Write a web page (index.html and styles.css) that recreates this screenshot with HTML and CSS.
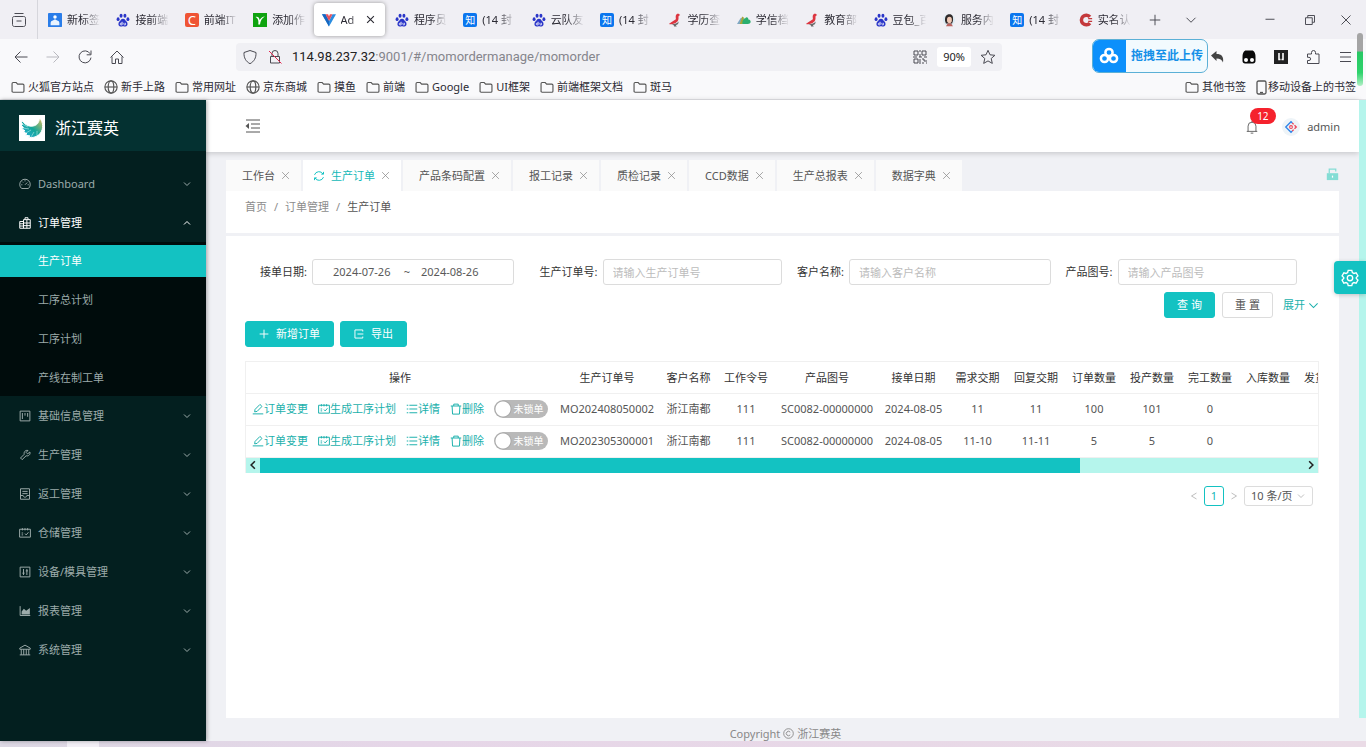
FILE: index.html
```html
<!DOCTYPE html>
<html lang="zh-CN">
<head>
<meta charset="utf-8">
<title>生产订单</title>
<link rel="stylesheet" href="styles.css">
</head>
<body>
<svg class="defs" aria-hidden="true">
  <symbol id="paw" viewBox="0 0 16 16"><g fill="#2a35c8"><ellipse cx="2.4" cy="7" rx="1.7" ry="2.2"/><ellipse cx="5.8" cy="3.1" rx="1.7" ry="2.3"/><ellipse cx="10.2" cy="3.1" rx="1.7" ry="2.3"/><ellipse cx="13.6" cy="7" rx="1.7" ry="2.2"/><path d="M8 6.6c2.4 0 2.6 2 4 3.200 1.700 1.500 1.800 5.600-1.200 5.600-1.200 0-1.800-.4-2.800-.4s-1.600.4-2.800.4c-3 0-2.900-4.100-1.200-5.600C5.400 8.600 5.600 6.600 8 6.600z"/></g><path d="M7 10v3.600H5.800a1 1 0 0 1 0-2H7M9 11.200v1.600c0 .6.300.8 1.700.8v-2.400" fill="none" stroke="#fff" stroke-width=".9"/></symbol>
  <symbol id="bird" viewBox="0 0 16 16"><path d="M11.500 .7c-2 .6-2.800 2-2.700 4l.2 2.500C7.500 8.600 5 9.500 1 12.600c4 .6 7-.2 9-2.200 1.700-1.700 2.200-3.200 2-5.400-.1-1.400.2-2.200 2-2.800z" fill="#dc3540"/><path d="M4 12.600c3 .2 6.500-.6 8-3 .4 2.400-1 4-3 4.100l1 1.700H7l-.6-1.600z" fill="#6b6a6a"/></symbol>
  <symbol id="hill" viewBox="0 0 16 16"><path d="M0 12.500 4 6l2-1-2.500 7.500z" fill="#7fa7c4"/><path d="M3 12.500 6 4l2 1.500-1.500 7z" fill="#a7a338"/><path d="M6 12.500C6 8 8 5.500 9.500 6c1-2 3.500-1 3.500 1.300 2 0 3 1.700 2.500 3.400-.3 1.300-1.500 1.800-3 1.800z" fill="#2aae6e"/></symbol>
  <symbol id="folder" viewBox="0 0 16 16"><path d="M1.200 12.800V4.200c0-.8.500-1.300 1.300-1.300h3.400l1.700 1.800h5.900c.8 0 1.300.5 1.300 1.300v6.800c0 .7-.5 1.200-1.300 1.200h-11c-.8 0-1.300-.5-1.300-1.200z"/></symbol>
  <symbol id="globe" viewBox="0 0 16 16"><circle cx="8" cy="8" r="7"/><ellipse cx="8" cy="8" rx="3.200" ry="7"/><path d="M1 8h14"/></symbol>
  <symbol id="down" viewBox="0 0 16 16"><path d="M2 5l6 6 6-6"/></symbol>
  <symbol id="up" viewBox="0 0 16 16"><path d="M2 11l6-6 6 6"/></symbol>
  <symbol id="left" viewBox="0 0 16 16"><path d="M13 2L3 8l10 6"/></symbol>
  <symbol id="right" viewBox="0 0 16 16"><path d="M3 2l10 6-10 6"/></symbol>
  <symbol id="x" viewBox="0 0 16 16"><path d="M2 2l12 12M14 2L2 14"/></symbol>
  <symbol id="plus" viewBox="0 0 16 16"><path d="M8 1v14M1 8h14"/></symbol>
  <symbol id="edit" viewBox="0 0 16 16"><path d="M1 14.500h14M3.500 11.800l.6-3.300 6.500-6.600 2.700 2.700-6.500 6.600z"/></symbol>
  <symbol id="plan" viewBox="0 0 16 16"><path d="M.8 3h14.400v10.500H.8zM4.500 1.500v3M8 1.500v3M11.500 1.500v3M3.500 8h2M3.500 10.500h2M8 8.800l1.600 1.800L12.600 7"/></symbol>
  <symbol id="list" viewBox="0 0 16 16"><path d="M4.500 3H15M4.500 8H15M4.500 13H15M1 3h2M1 8h2M1 13h2"/></symbol>
  <symbol id="trash" viewBox="0 0 16 16"><path d="M1 4h14M5 4V1.500h6V4M2.800 4l.6 10.800h9.200L13.200 4"/></symbol>
</svg>

<div class="browser">
  <div class="tabstrip">
    <button class="recent" aria-label="历史标签"><svg class="i16" viewBox="0 0 16 16"><path d="M3.500 1.500h9M1.500 6.500c0-1.500.5-2 2-2h9c1.500 0 2 .5 2 2v6c0 1.300-.7 2-2 2h-9c-1.300 0-2-.7-2-2zM5.500 9h5"/></svg></button>
    <div class="tabs">
      <button class="tab"><svg class="fav" viewBox="0 0 16 16"><rect width="16" height="16" rx="1" fill="#2a7de9"/><circle cx="8" cy="4.500" r="2" fill="#fff"/><path d="M3 14V11q0-2 2.500-2.500L8 7l2.500 1.500Q13 9 13 11v3z" fill="#e9f3ff"/></svg><span>新标签</span></button>
      <button class="tab"><svg class="fav"><use href="#paw"/></svg><span>接前端</span></button>
      <button class="tab"><i class="fav letter orange">C</i><span>前端IT</span></button>
      <button class="tab"><svg class="fav" viewBox="0 0 16 16"><rect width="16" height="16" fill="#0fa30f"/><path d="M3 4.500c3-.5 4 1 4.500 3.500C9 6 11 4 13.500 4 10 6 8.500 9 8 13H6c.5-3 .5-6.500-3-8.500z" fill="#fff"/></svg><span>添加作</span></button>
      <button class="tab current"><svg class="fav" viewBox="0 0 16 16"><path d="M0 1.500h4L8 9l4-7.500h4L8 15.500z" fill="#2b8de0"/><path d="M0 1.500h4L8 9v6.500z" fill="#1867c0"/><path d="M4 1.500h3L8 4l1-2.500h3L8 9z" fill="#e8505b"/></svg><span>Ad</span><svg class="tabx"><use href="#x"/></svg></button>
      <button class="tab"><svg class="fav"><use href="#paw"/></svg><span>程序员</span></button>
      <button class="tab"><i class="fav letter blue">知</i><span>(14 封</span></button>
      <button class="tab"><svg class="fav"><use href="#paw"/></svg><span>云队友</span></button>
      <button class="tab"><i class="fav letter blue">知</i><span>(14 封</span></button>
      <button class="tab"><svg class="fav"><use href="#bird"/></svg><span>学历查</span></button>
      <button class="tab"><svg class="fav"><use href="#hill"/></svg><span>学信档</span></button>
      <button class="tab"><svg class="fav"><use href="#bird"/></svg><span>教育部</span></button>
      <button class="tab"><svg class="fav"><use href="#paw"/></svg><span>豆包_百</span></button>
      <button class="tab"><svg class="fav" viewBox="0 0 16 16"><circle cx="8" cy="8" r="7" fill="#dceaf2"/><path d="M3.500 9C3 4 5 1.500 8.500 1.500S13 4 12.500 9l-1 3h-7z" fill="#302a2a"/><ellipse cx="8.500" cy="8" rx="2.800" ry="3.600" fill="#f0c8b4"/><path d="M4.500 15l2-3h4l2 3z" fill="#b9615d"/></svg><span>服务内</span></button>
      <button class="tab"><i class="fav letter blue">知</i><span>(14 封</span></button>
      <button class="tab"><svg class="fav" viewBox="0 0 16 16"><path d="M12.500 4.500A5.500 5.500 0 1 0 12.500 11.500" fill="none" stroke="#c4393c" stroke-width="4"/><path d="M10.500 6.500H15M10.500 9.500H15" stroke="#c4393c" stroke-width="1.500"/></svg><span>实名认</span></button>
    </div>
    <div class="winctl">
      <button aria-label="新建标签"><svg class="i12"><use href="#plus"/></svg></button>
      <button aria-label="标签列表"><svg class="i12"><use href="#down"/></svg></button>
      <button class="push" aria-label="最小化"><svg class="i12" viewBox="0 0 16 16"><path d="M2 7h12"/></svg></button>
      <button aria-label="还原"><svg class="i12" viewBox="0 0 16 16"><path d="M2 5h9v9H2zM5 5V2h9v9h-3"/></svg></button>
      <button aria-label="关闭"><svg class="i12"><use href="#x"/></svg></button>
    </div>
  </div>

  <div class="navbar">
    <div class="navbtns">
      <button aria-label="后退"><svg class="i16" viewBox="0 0 16 16"><path d="M14.500 8H2M7.500 2.500L2 8l5.500 5.500"/></svg></button>
      <button class="off" aria-label="前进"><svg class="i16" viewBox="0 0 16 16"><path d="M1.500 8H14M8.500 2.500L14 8l-5.500 5.500"/></svg></button>
      <button aria-label="刷新"><svg class="i16" viewBox="0 0 16 16"><path d="M13.200 4.800A6 6 0 1 0 14 8.600M14 1.500v4.300H9.700"/></svg></button>
      <button aria-label="主页"><svg class="i16" viewBox="0 0 16 16"><path d="M1.500 8.500L8 2l6.500 6.500M3 7.500v7h3.500V10h3v4.500H13v-7"/></svg></button>
    </div>
    <div class="urlbar">
      <svg class="i16" viewBox="0 0 16 16"><path d="M8 1.500l6 2c.3 5.500-2 9-6 11.200C4 12.500 1.700 9 2 3.500z"/></svg>
      <svg class="i16" viewBox="0 0 16 16"><path d="M3.500 7.500h9v6.500h-9zM5 7.500V4.500a3 3 0 0 1 6 0v3"/><path d="M2 2l12.500 12.500" stroke="#e22850"/></svg>
      <p class="url"><b>114.98.237.32</b>:9001/#/momordermanage/momorder</p>
      <svg class="i16 qr" viewBox="0 0 16 16"><path d="M2 2h4v4H2zM10 2h4v4h-4zM2 10h4v4H2zM8 1v2M8 5v3M1 8h4M7 8h3M12 8h3M8 10v5M10 10h2v2h3M10 14h2M14 14h1"/></svg>
      <span class="zoomlevel">90%</span>
      <svg class="i16" viewBox="0 0 16 16"><path d="M8 1.300l2 4.500 4.900.5-3.700 3.200 1.100 4.900L8 11.900l-4.300 2.500 1.100-4.900L1.100 6.300 6 5.800z"/></svg>
    </div>
    <div class="exts">
      <svg class="i16" viewBox="0 0 16 16"><path d="M2 6.500L7.500 2v3c5 0 7.500 2.500 6.500 8.500-1-2.800-3-4-6.500-4v2.500z" fill="#444" stroke="none"/></svg>
      <svg class="i16" viewBox="0 0 16 16"><path d="M1.500 8C1.500 4 3 1.500 5 1.500h6c2 0 3.500 2.500 3.500 6.500v4c0 1.500-1 2.500-2.500 2.500H4c-1.500 0-2.500-1-2.500-2.500z" fill="#0a0a0a" stroke="none"/><circle cx="5" cy="11" r="2" fill="#fff" stroke="none"/><circle cx="11" cy="11" r="2" fill="#fff" stroke="none"/></svg>
      <svg class="i16" viewBox="0 0 16 16"><path d="M1 1h14v14H1z" fill="#222" stroke="none"/><path d="M6 4v6.500h1.500M10 4v6.500H8.500" stroke="#fff" stroke-width="1.600"/></svg>
      <svg class="i16" viewBox="0 0 16 16"><path d="M2.500 5h4V3.500a2 2 0 0 1 4 0V5h3.500v9.500H2.500v-3H4a1.600 1.600 0 0 0 0-3.200H2.500z"/></svg>
      <svg class="i16" viewBox="0 0 16 16"><path d="M3 3.500h11M3 8h11M3 12.500h11"/></svg>
    </div>
    <button class="upload"><span class="cloud"><svg viewBox="0 0 20 20"><circle cx="10" cy="6.500" r="3.600"/><circle cx="5.500" cy="12.500" r="3.600"/><circle cx="14.500" cy="12.500" r="3.600"/></svg></span><span class="uptext">拖拽至此上传</span></button>
    <i class="pill"></i>
  </div>

  <div class="bookmarks">
    <a href="#"><svg class="i14"><use href="#folder"/></svg>火狐官方站点</a>
    <a href="#"><svg class="i14"><use href="#globe"/></svg>新手上路</a>
    <a href="#"><svg class="i14"><use href="#folder"/></svg>常用网址</a>
    <a href="#"><svg class="i14"><use href="#globe"/></svg>京东商城</a>
    <a href="#"><svg class="i14"><use href="#folder"/></svg>摸鱼</a>
    <a href="#"><svg class="i14"><use href="#folder"/></svg>前端</a>
    <a href="#"><svg class="i14"><use href="#folder"/></svg>Google</a>
    <a href="#"><svg class="i14"><use href="#folder"/></svg>UI框架</a>
    <a href="#"><svg class="i14"><use href="#folder"/></svg>前端框架文档</a>
    <a href="#"><svg class="i14"><use href="#folder"/></svg>斑马</a>
    <a href="#" class="push"><svg class="i14"><use href="#folder"/></svg>其他书签</a>
    <a href="#" class="phone"><svg viewBox="0 0 11 15"><rect x="1" y="1" width="9" height="13" rx="1.500"/><path d="M4 12.500h3"/></svg>移动设备上的书签</a>
  </div>
</div>

<div class="app">
  <aside class="side">
    <div class="brand">
      <svg viewBox="0 0 26 26"><defs><linearGradient id="wing" x1="0" y1="1" x2="1" y2="0"><stop offset="0" stop-color="#27aee0"/><stop offset=".5" stop-color="#14a79b"/><stop offset="1" stop-color="#e8c05a"/></linearGradient></defs><path d="M0 0h26v26H0z" fill="#fff"/><path d="M2 4c3 5 7 8 12 7 4-.6 6-3 6.500-8 4 4 4 11 1 15-2.500 3.600-8 5.500-12.500 4l2-1-5-1 2-1.200-4-2 2-1-3.500-2.300 2-.8-2.800-3 2-.4-2.200-3 1.800.2z" fill="url(#wing)"/><path d="M3 9l6 3M4 13l6 1M7 18l5-3M12 22l3-5M18 21v-5" stroke="#d5f4ee" stroke-width=".5"/></svg>
      <h1>浙江赛英</h1>
    </div>
    <nav class="menu">
      <a href="#"><svg class="i12" viewBox="0 0 16 16"><path d="M3.500 14a7 7 0 1 1 9 0zM8 9l3-3M8 3v1.500M3 9h1.500M11.500 9H13M4.500 5l1 1"/></svg>Dashboard<svg class="arrow"><use href="#down"/></svg></a>
      <a href="#" class="open"><svg class="i12" viewBox="0 0 16 16"><path d="M1 6h5v9H1zM6 15V3.500h9V15zM8 3.500V1h4v2.500M6 8h9M6 11.500h9M10.500 3.500V15M1 9h5M1 12h5"/></svg>订单管理<svg class="arrow"><use href="#up"/></svg></a>
      <div class="sub">
        <a href="#" class="selected">生产订单</a>
        <a href="#">工序总计划</a>
        <a href="#">工序计划</a>
        <a href="#">产线在制工单</a>
      </div>
      <a href="#"><svg class="i12" viewBox="0 0 16 16"><path d="M1.500 1.500h13v13h-13zM4.500 4v8M8 4v3.500M11.500 4v5"/></svg>基础信息管理<svg class="arrow"><use href="#down"/></svg></a>
      <a href="#"><svg class="i12" viewBox="0 0 16 16"><path d="M2 12l5-5c-.8-3 1.500-6 5-5L9.500 4.500l2 2L14.500 4c1 3.500-2 6-5 5l-5.300 5.200z"/></svg>生产管理<svg class="arrow"><use href="#down"/></svg></a>
      <a href="#"><svg class="i12" viewBox="0 0 16 16"><path d="M2 1h12v14H2zM4.500 4.500h7M4.500 7.500h7M2 10h3.500c0 3 5 3 5 0H14"/></svg>返工管理<svg class="arrow"><use href="#down"/></svg></a>
      <a href="#"><svg class="i12"><use href="#plan"/></svg>仓储管理<svg class="arrow"><use href="#down"/></svg></a>
      <a href="#"><svg class="i12" viewBox="0 0 16 16"><path d="M1.500 1.500h13v13h-13zM6 4v8M4.500 9.500h3M10.500 4v8M9 6.500h3"/></svg>设备/模具管理<svg class="arrow"><use href="#down"/></svg></a>
      <a href="#"><svg class="i12" viewBox="0 0 16 16"><path d="M1.500 1.500v12.500H15"/><path d="M3.500 12.500V8.500L6.500 5l3 2.500L14.500 4v8.500z" fill="currentColor" stroke="none"/></svg>报表管理<svg class="arrow"><use href="#down"/></svg></a>
      <a href="#"><svg class="i12" viewBox="0 0 16 16"><path d="M1 7V5.500L8 1.500l7 4V7zM1 14.500h14M3 7v7.500M6.300 7v7.500M9.700 7v7.500M13 7v7.500"/></svg>系统管理<svg class="arrow"><use href="#down"/></svg></a>
    </nav>
  </aside>

  <div class="main">
    <header class="top">
      <button aria-label="收起菜单"><svg class="i16" viewBox="0 0 16 16"><path d="M1 2h14M6 6h9M6 10h9M1 14h14"/><path d="M4 5v6L.5 8z" fill="currentColor" stroke="none"/></svg></button>
      <div class="user">
        <button class="bell" aria-label="通知"><svg class="i14" viewBox="0 0 16 16"><path d="M2 13h12M3.500 13V7a4.500 4.500 0 0 1 9 0v6M8 2.500V1M6.500 15h3"/></svg><span class="badge">12</span></button>
        <span class="avatar"><svg viewBox="0 0 16 16"><path d="M9.500 3.500L8 2 2 8l6 6 1.500-1.500" fill="none" stroke="#2c83e8" stroke-width="1.500"/><path d="M9.500 3.500L11 5M9.500 12.500L11 11M12 6l2 2-2 2" fill="none" stroke="#ee4054" stroke-width="1.500"/><circle cx="8" cy="8" r="1.600" fill="none" stroke="#ee4054" stroke-width="1.200"/></svg></span>
        <span>admin</span>
      </div>
    </header>

    <div class="pages">
      <button>工作台<svg><use href="#x"/></svg></button>
      <button class="on"><svg class="spin" viewBox="0 0 16 16"><path d="M2 6.500a6.300 6.300 0 0 1 11.500-1M14 9.500a6.300 6.300 0 0 1-11.500 1M14 2.500v3h-3M2 13.500v-3h3"/></svg>生产订单<svg><use href="#x"/></svg></button>
      <button>产品条码配置<svg><use href="#x"/></svg></button>
      <button>报工记录<svg><use href="#x"/></svg></button>
      <button>质检记录<svg><use href="#x"/></svg></button>
      <button>CCD数据<svg><use href="#x"/></svg></button>
      <button>生产总报表<svg><use href="#x"/></svg></button>
      <button>数据字典<svg><use href="#x"/></svg></button>
      <svg class="unlock" viewBox="0 0 16 16"><path d="M1 7h14v8.500H1z" fill="currentColor" stroke="none"/><path d="M4 7V2h8v3"/><path d="M8 10v2.500" stroke="#fff"/></svg>
    </div>

    <div class="crumbs"><a href="#">首页</a><i>/</i><a href="#">订单管理</a><i>/</i><span>生产订单</span></div>

    <section class="panel">
      <form class="filters">
        <div class="field"><label for="d1">接单日期:</label><div class="range"><input id="d1" value="2024-07-26"><span>~</span><input aria-label="结束日期" value="2024-08-26"></div></div>
        <div class="field inset"><label for="no">生产订单号:</label><input id="no" placeholder="请输入生产订单号"></div>
        <div class="field"><label for="cu">客户名称:</label><input id="cu" placeholder="请输入客户名称"></div>
        <div class="field outset"><label for="dr">产品图号:</label><input id="dr" placeholder="请输入产品图号"></div>
      </form>
      <div class="query"><button class="btn primary">查 询</button><button class="btn">重 置</button><a href="#">展开<svg><use href="#down"/></svg></a></div>
      <div class="tools"><button class="btn primary"><svg><use href="#plus"/></svg>新增订单</button><button class="btn primary"><svg viewBox="0 0 16 16"><path d="M14 4V1.500H1.500v13H14V12M5.500 8H15"/></svg>导出</button></div>

      <div class="tablebox">
        <div class="clip">
        <table>
          <colgroup><col class="w308"><col class="w106"><col class="w57"><col class="w58"><col class="w104"><col class="w69"><col class="w59"><col class="w58"><col class="w58"><col class="w58"><col class="w58"><col class="w58"><col class="w58"><col></colgroup>
          <thead><tr><th>操作</th><th>生产订单号</th><th>客户名称</th><th>工作令号</th><th>产品图号</th><th>接单日期</th><th>需求交期</th><th>回复交期</th><th>订单数量</th><th>投产数量</th><th>完工数量</th><th>入库数量</th><th>发货数量</th><th></th></tr></thead>
          <tbody>
            <tr><td><div class="ops"><a href="#"><svg><use href="#edit"/></svg>订单变更</a><a href="#"><svg><use href="#plan"/></svg>生成工序计划</a><a href="#"><svg><use href="#list"/></svg>详情</a><a href="#"><svg><use href="#trash"/></svg>删除</a><button class="switch" role="switch" aria-checked="false">未锁单</button></div></td><td>MO202408050002</td><td>浙江南都</td><td>111</td><td>SC0082-00000000</td><td>2024-08-05</td><td>11</td><td>11</td><td>100</td><td>101</td><td>0</td><td></td><td></td><td></td></tr>
            <tr><td><div class="ops"><a href="#"><svg><use href="#edit"/></svg>订单变更</a><a href="#"><svg><use href="#plan"/></svg>生成工序计划</a><a href="#"><svg><use href="#list"/></svg>详情</a><a href="#"><svg><use href="#trash"/></svg>删除</a><button class="switch" role="switch" aria-checked="false">未锁单</button></div></td><td>MO202305300001</td><td>浙江南都</td><td>111</td><td>SC0082-00000000</td><td>2024-08-05</td><td>11-10</td><td>11-11</td><td>5</td><td>5</td><td>0</td><td></td><td></td><td></td></tr>
          </tbody>
        </table>
        </div>
        <div class="hscroll"><svg viewBox="0 0 16 16"><path d="M11 2L5 8l6 6"/></svg><div class="track"><div class="thumb"></div></div><svg viewBox="0 0 16 16"><path d="M5 2l6 6-6 6"/></svg></div>
      </div>

      <div class="pager"><button aria-label="上一页"><svg><use href="#left"/></svg></button><button class="now">1</button><button aria-label="下一页"><svg><use href="#right"/></svg></button><span class="size"><select aria-label="每页条数"><option>10 条/页</option></select><svg><use href="#down"/></svg></span></div>
    </section>

    <footer>Copyright <svg viewBox="0 0 16 16"><circle cx="8" cy="8" r="7"/><path d="M10.500 6a3.200 3.200 0 1 0 0 4"/></svg> 浙江赛英</footer>
  </div>
  <div class="vtrack"></div>
  <button class="gear" aria-label="设置"><svg viewBox="0 0 20 20"><path d="M8 1.500h4l.6 2.400 1.800 1 2.400-.7 2 3.500-1.800 1.700v1.200l1.800 1.700-2 3.500-2.400-.7-1.800 1-.6 2.400H8l-.6-2.400-1.800-1-2.400.7-2-3.500L3 10.600V9.400L1.200 7.700l2-3.500 2.400.7 1.800-1z"/><circle cx="10" cy="10" r="3"/></svg></button>
</div>
<div class="desk"><i></i></div>
</body>
</html>
```

FILE: styles.css
```css
* { box-sizing: border-box; }
body {
  margin: 0;
  min-height: 100vh;
  display: flex;
  flex-direction: column;
  font: 11px/16px "Noto Sans", "Noto Sans CJK SC", sans-serif;
  color: #555;
  overflow: hidden;
}
button, input, select { font: inherit; color: inherit; }
button { border: 0; background: none; padding: 0; display: flex; align-items: center; justify-content: center; white-space: nowrap; }
a { color: inherit; text-decoration: none; display: flex; align-items: center; white-space: nowrap; }
i { font-style: normal; }
svg { fill: none; stroke: currentColor; flex: none; }
.defs { position: absolute; width: 0; height: 0; }
.i16 { width: 16px; height: 16px; }
.i14 { width: 14px; height: 14px; }
.i12 { width: 12px; height: 12px; stroke-width: 1.3px; }
.push { margin-left: auto; }

/* browser frame */
.browser { color: #4a4a52; background: #f9f9fb; border-bottom: 1px solid #e2e2e6; }
.tabstrip { display: flex; align-items: center; height: 39px; background: #f0eff4; }
.recent { width: 38px; height: 39px; border-right: 1px solid #d6d6dc; }
.tabs { display: flex; flex: 1; padding-left: 2px; min-width: 0; }
.tab { flex: 1 1 0; min-width: 0; height: 33px; margin-right: 2px; padding: 0 5px 0 8px; gap: 5px; border-radius: 4px; justify-content: flex-start; color: #2b2a33; }
.tab span { flex: 1; min-width: 0; overflow: hidden; text-align: left; mask-image: linear-gradient(to right, #000 45%, transparent 98%); }
.fav { width: 14px; height: 14px; flex: none; stroke: none; }
.letter { border-radius: 2px; color: #fff; font-size: 10px; line-height: 14px; text-align: center; }
.orange { background: #ef5434; font-size: 13px; }
.blue { background: #0b76ee; }
.current { padding-right: 10px; background: #fff; box-shadow: 0 0 4px #999; }
.tabx { width: 9px; height: 9px; stroke-width: 2; }
.winctl { display: flex; align-items: center; width: 227px; padding: 0 14px 0 10px; gap: 24px; }
.winctl .push { margin-right: 4px; margin-left: auto; }

.navbar { position: relative; display: flex; align-items: center; height: 36px; }
.navbtns { display: flex; gap: 16px; padding-left: 13px; width: 236px; }
.off { color: #b9b9bf; }
.urlbar { flex: 1; display: flex; align-items: center; height: 28px; padding: 0 6px; gap: 9px; border-radius: 4px; background: #f0f0f4; }
.url { flex: 1; margin: 0; font: 13px/20px Roboto, "Noto Sans", sans-serif; color: #85858c; }
.url b { font-weight: 400; color: #222; }
.zoomlevel { padding: 2px 6px; border-radius: 3px; background: #fff; font-size: 11px; color: #222; }
.exts { display: flex; justify-content: space-between; width: 364px; padding: 0 13px 0 207px; }
.upload { position: absolute; top: 0; right: 158px; height: 34px; border: 1px solid #5bb0d6; border-radius: 7px; background: #f2fafe; color: #1590e8; font-size: 12px; font-weight: 700; overflow: hidden; }
.cloud { display: flex; align-items: center; justify-content: center; width: 33px; height: 34px; background: #0c90fb; }
.cloud svg { width: 20px; height: 20px; stroke: #fff; stroke-width: 2.5; }
.uptext { padding: 0 4px 0 5px; }
.pill { position: absolute; top: -6px; right: 3px; width: 6px; height: 53px; border-radius: 3px; background: linear-gradient(#a5a5a5 34%, #28c864 36%, #2fd36c 75%, #b2efc6); }

.bookmarks { display: flex; align-items: center; height: 24px; padding: 0 10px 0 11px; gap: 10px; color: #2b2a33; }
.bookmarks a { gap: 3px; }
.bookmarks svg { stroke: #555; stroke-width: 1.3px; }
.bookmarks .phone { gap: 1px; }
.phone svg { width: 11px; height: 15px; }

/* application */
.app { position: relative; flex: 1; display: flex; background: #f0f1f5; }
.side { width: 206px; background: #031f1f; color: #9cabaa; z-index: 1; box-shadow: 1px 0 4px #0005; }
.brand { display: flex; align-items: center; gap: 10px; height: 51px; padding: 4px 0 0 19px; background: #043131; color: #fff; }
.brand svg { width: 26px; height: 26px; }
.brand h1 { margin: 0; font-size: 16px; line-height: 24px; font-weight: 400; }
.menu { padding-top: 13px; }
.menu a { height: 39px; padding: 0 15px 0 19px; gap: 7px; }
.menu .arrow { width: 8px; height: 8px; margin-left: auto; stroke-width: 2; }
.menu .open { color: #fff; }
.menu .sub { display: flex; flex-direction: column; gap: 7px; padding: 3px 0 2px; background: #000c0c; }
.menu .sub a { height: 32px; padding-left: 38px; }
.menu .sub .selected { background: #13c2c2; color: #fff; }

.main { flex: 1; min-width: 0; display: flex; flex-direction: column; }
.top { display: flex; align-items: center; justify-content: space-between; height: 52px; padding: 0 19px 0 39px; background: #fff; box-shadow: 0 1px 6px #0003; }
.user { display: flex; align-items: center; padding-top: 2px; }
.bell { position: relative; }
.badge { position: absolute; left: 5px; top: -12px; padding: 0 7px; border-radius: 8px; background: #f5222d; color: #fff; font-size: 10px; line-height: 16px; }
.avatar { display: flex; margin: 0 7px 0 23px; padding: 2px; border-radius: 50%; background: #eef4f8; }
.avatar svg { width: 14px; height: 14px; }

.pages { display: flex; gap: 2px; height: 31px; margin: 8px 20px 0; }
.pages button { padding: 0 11px 0 16px; gap: 6px; background: #fafafa; }
.pages button svg { width: 9px; height: 9px; stroke: #888; stroke-width: 1.3; }
.pages .on { padding-left: 10px; background: #fff; color: #13b9b9; }
.pages .on .spin { width: 12px; height: 12px; stroke: #13c2c2; }
.unlock { width: 13px; height: 14px; margin: 7px 0 0 auto; color: #84ddd5; stroke-width: 1.5; }

.crumbs { display: flex; height: 42px; margin: 0 20px; padding: 8px 19px; background: #fff; color: #8c8c8c; line-height: 16px; }
.crumbs a { height: 16px; }
.crumbs i { padding: 0 7px; }
.crumbs span { color: #555; }

.panel { flex: 1; margin: 3px 20px 0; padding: 23px 20px 0 19px; background: #fff; }
.filters { display: grid; grid-template-columns: repeat(4, 1fr); }
.field { display: flex; align-items: center; gap: 5px; color: #333; }
.field label { min-width: 62px; text-align: right; white-space: nowrap; }
.inset { padding-left: 22px; }
.outset { padding-right: 22px; }
.field > input, .range { flex: 1; min-width: 0; width: 0; height: 26px; padding: 0 9px; border: 1px solid #dcdcdc; border-radius: 3px; background: #fff; outline: 0; }
.field input::placeholder { color: #bcbcbc; }
.range { display: flex; align-items: center; padding: 0 20px; color: #595959; }
.range input { width: 60px; padding: 0; border: 0; outline: 0; }
.range span { flex: 1; max-width: 28px; text-align: center; }
.query { display: flex; justify-content: flex-end; gap: 7px; margin-top: 7px; }
.query a { gap: 3px; padding-left: 3px; color: #1ab0ac; }
.query a svg { width: 11px; height: 11px; stroke-width: 1.5; }
.btn { height: 26px; padding: 0 13px; gap: 7px; border: 1px solid #dcdcdc; border-radius: 3px; background: #fff; }
.query .btn { width: 51px; padding: 0; }
.primary { border-color: #13c2c2; background: #13c2c2; color: #fff; }
.btn svg { width: 10px; height: 10px; stroke-width: 1.5; }
.tools { display: flex; gap: 6px; margin-top: 3px; }

.tablebox { margin-top: 14px; border: 1px solid #f0f0f0; border-bottom: 0; }
.clip { overflow: hidden; }
table { width: 1368px; table-layout: fixed; border-collapse: collapse; text-align: center; }
.w308 { width: 308px; } .w106 { width: 106px; } .w104 { width: 104px; } .w69 { width: 69px; }
.w59 { width: 59px; } .w58 { width: 58px; } .w57 { width: 57px; }
th, td { padding: 0; height: 32px; font-weight: 400; white-space: nowrap; border-bottom: 1px solid #f0f0f0; }
th { height: 31px; padding-top: 2px; color: #333; }
.ops { display: flex; align-items: center; gap: 10px; padding-left: 6px; color: #1ab0ac; }
.ops svg { width: 12px; height: 12px; stroke-width: 1.3px; }
.switch { height: 18px; width: 54px; padding: 0 4px 0 19px; border-radius: 9px; color: #fff; font-size: 10px; background: radial-gradient(circle at 9px 9px, #fff 7px, #a8a8a8 8px, #b9b9b9 9px); }
.hscroll { display: flex; align-items: center; height: 15px; background: #b5f5ec; color: #222; }
.hscroll svg { width: 10px; height: 10px; margin: 0 2px; stroke-width: 2.5; }
.track { flex: 1; height: 15px; }
.thumb { width: 78.5%; height: 15px; background: #13c2c2; }
.pager { display: flex; justify-content: flex-end; align-items: center; gap: 5px; margin: 13px 6px 0 0; }
.pager svg { width: 8px; height: 8px; stroke: #aaa; stroke-width: 1.5; }
.pager button { min-width: 10px; height: 20px; }
.pager .now { width: 20px; border: 1px solid #13c2c2; border-radius: 3px; color: #13b5b5; }
.size { position: relative; display: flex; align-items: center; }
.size select { width: 69px; height: 20px; padding: 0 6px; border: 1px solid #dcdcdc; border-radius: 3px; background: #fff; appearance: none; }
.size svg { position: absolute; right: 8px; }
footer { display: flex; align-items: center; justify-content: center; gap: 3px; height: 23px; padding: 8px 0 0 6px; color: #888; }
footer svg { width: 11px; height: 11px; stroke-width: 1.3; }
.vtrack { width: 7px; margin-bottom: 23px; background: #b5f5ec; z-index: 1; }
.gear { position: absolute; right: 0; top: 161px; width: 32px; height: 33px; border-radius: 4px 0 0 4px; background: #13c2c2; color: #fff; box-shadow: 0 1px 4px #0003; z-index: 2; }
.gear svg { width: 18px; height: 18px; stroke-width: 1.5; }
.desk { height: 6px; padding-left: 67px; background: linear-gradient(to right, #dcd8e4, #e6d6e8 30%, #eadbe6); }
.desk i { display: block; width: 32px; height: 6px; background: #f2eff6; }
```
